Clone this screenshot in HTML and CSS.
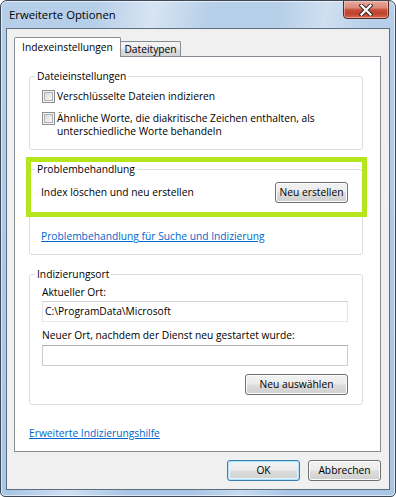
FILE: index.html
```html
<!DOCTYPE html>
<html lang="de">
<head>
<meta charset="utf-8">
<title>Erweiterte Optionen</title>
<link rel="stylesheet" href="styles.css">
</head>
<body>
<div class="window">
  <div class="titlebar">
    <span class="title">Erweiterte Optionen</span>
    <button class="close" aria-label="Schließen">
      <svg width="14" height="12" viewBox="0 0 14 12">
        <path d="M2.5 1.5 L11.5 10.5 M11.5 1.5 L2.5 10.5" stroke="#3a2a2a" stroke-width="4.2" stroke-linecap="square" fill="none"/>
        <path d="M2.5 1.5 L11.5 10.5 M11.5 1.5 L2.5 10.5" stroke="#ffffff" stroke-width="2.2" stroke-linecap="square" fill="none"/>
      </svg>
    </button>
  </div>
  <div class="client">
    <div class="tabs">
      <div class="tab active">Indexeinstellungen</div>
      <div class="tab">Dateitypen</div>
    </div>
    <div class="page">
      <fieldset class="group g1">
        <legend>Dateieinstellungen</legend>
        <label class="check"><input type="checkbox"><span>Verschlüsselte Dateien indizieren</span></label>
        <label class="check check2"><input type="checkbox"><span>Ähnliche Worte, die diakritische Zeichen enthalten, als<br>unterschiedliche Worte behandeln</span></label>
      </fieldset>
      <div class="annot">
        <fieldset class="group g2">
          <legend>Problembehandlung</legend>
          <div class="row">
            <span>Index löschen und neu erstellen</span>
            <button class="btn btn-rebuild">Neu erstellen</button>
          </div>
          <a class="link trouble" href="#">Problembehandlung für Suche und Indizierung</a>
        </fieldset>
        <div class="highlight"></div>
      </div>
      <fieldset class="group g3">
        <legend>Indizierungsort</legend>
        <div class="field-label">Aktueller Ort:</div>
        <div class="textbox readonly">C:\ProgramData\Microsoft</div>
        <div class="field-label second">Neuer Ort, nachdem der Dienst neu gestartet wurde:</div>
        <div class="textbox"></div>
        <div class="right">
          <button class="btn btn-select">Neu auswählen</button>
        </div>
      </fieldset>
      <a class="link help" href="#">Erweiterte Indizierungshilfe</a>
    </div>
    <div class="actions">
      <button class="btn btn-default">OK</button>
      <button class="btn">Abbrechen</button>
    </div>
  </div>
</div>
</body>
</html>
```

FILE: styles.css
```css
html, body {
  margin: 0;
  padding: 0;
  background: #ffffff;
}

body {
  font-family: "Open Sans", "Noto Sans", sans-serif;
  font-size: 10.25px;
  line-height: 13px;
  color: #000000;
}

.window {
  box-sizing: border-box;
  width: 396px;
  height: 497px;
  border: 1px solid #3d4957;
  border-radius: 7px 7px 5px 5px;
  padding: 0 5px 6px 5px;
  display: flex;
  flex-direction: column;
  background:
    linear-gradient(100deg, rgba(255,255,255,0) 20%, rgba(255,255,255,0.45) 32%, rgba(255,255,255,0) 44%),
    linear-gradient(100deg, rgba(255,255,255,0) 58%, rgba(255,255,255,0.35) 68%, rgba(255,255,255,0) 78%),
    linear-gradient(180deg, #b7cfe9 0%, #b0cae7 40%, #a9c6e6 100%);
  box-shadow: inset 0 0 0 1px rgba(255,255,255,0.6);
  overflow: hidden;
}

.titlebar {
  height: 27px;
  display: flex;
  justify-content: space-between;
  align-items: flex-start;
  flex: none;
}

.title {
  padding: 7px 0 0 3px;
  font-size: 11.3px;
  line-height: 14px;
  color: #000;
}

.close {
  box-sizing: border-box;
  width: 46px;
  height: 19px;
  margin: -1px 1px 0 0;
  padding: 0;
  border: 1px solid #5a2b25;
  border-radius: 0 0 4px 4px;
  background: linear-gradient(180deg, #e9aa9d 0%, #d98a7a 40%, #c6503b 52%, #c0422c 75%, #d66b55 100%);
  box-shadow: inset 0 0 0 1px rgba(255,220,210,0.45);
  display: flex;
  align-items: center;
  justify-content: center;
}

.client {
  box-sizing: border-box;
  height: 462px;
  border: 1px solid #5f6e7e;
  background: #f0f0f0;
  padding: 8px 0 0 7px;
  display: flex;
  flex-direction: column;
}

.tabs {
  position: relative;
  z-index: 1;
  height: 20px;
  margin-bottom: -1px;
  display: flex;
  align-items: flex-start;
}

.tab {
  box-sizing: border-box;
  border: 1px solid #898c95;
  border-bottom: none;
  text-align: center;
  white-space: nowrap;
}

.tab.active {
  position: relative;
  z-index: 2;
  width: 107px;
  height: 20px;
  background: #ffffff;
  padding-top: 3px;
  border-radius: 2px 2px 0 0;
}

.tab:not(.active) {
  width: 61px;
  height: 15px;
  margin-top: 4px;
  margin-left: -1px;
  padding-top: 1px;
  background: linear-gradient(180deg, #f4f4f4 0%, #ececec 50%, #dedede 51%, #d4d4d4 100%);
  border-radius: 2px 2px 0 0;
}

.page {
  box-sizing: border-box;
  width: 367px;
  height: 396px;
  border: 1px solid #898c95;
  background: #ffffff;
  padding: 0 0 0 14px;
  display: flex;
  flex-direction: column;
  align-items: flex-start;
}

.group {
  box-sizing: border-box;
  width: 334px;
  min-inline-size: 0;
  margin: 13px 0 0 0;
  border: 1px solid #d5dfe5;
  border-radius: 3px;
  padding: 0 14px 11px 11px;
}

.group legend {
  padding: 0 2px;
  line-height: 13px;
  color: #000;
}

.g1 {
  padding: 7px 12px 11px 12px;
}

.g1 legend,
.g3 legend {
  margin-left: -7px;
}

.check {
  display: flex;
  align-items: flex-start;
}

.check2 {
  margin-top: 9px;
}

.check input {
  -webkit-appearance: none;
  appearance: none;
  box-sizing: border-box;
  width: 13px;
  height: 13px;
  margin: 0 2px 0 0;
  flex: none;
  border: 1px solid #8e8f8f;
  background: linear-gradient(135deg, #cfd1d3 0%, #eeeeee 60%, #fafafa 100%);
  box-shadow: inset 0 0 0 1px #f4f4f4, inset 0 0 0 2px #aeb2b6;
}

.annot {
  position: relative;
  margin-top: 13px;
}

.g2 {
  margin-top: 0;
  padding: 6px 14px 11px 11px;
}

.g2 legend {
  margin-left: -6px;
}

.row {
  display: flex;
  justify-content: space-between;
  align-items: center;
}

.link {
  display: block;
  color: #0066cc;
  text-decoration: underline;
  text-underline-offset: 1px;
  white-space: nowrap;
}

.trouble {
  margin-top: 27px;
}

.highlight {
  position: absolute;
  left: -3px;
  top: -6px;
  width: 341px;
  height: 60px;
  box-sizing: border-box;
  border: 5px solid #b5e61d;
  pointer-events: none;
}

.g3 {
  padding: 5px 14px 9px 12px;
}

.field-label.second {
  margin-top: 7px;
}

.textbox {
  box-sizing: border-box;
  height: 21px;
  margin-top: 2px;
  border: 1px solid #abadb3;
  background: #ffffff;
  padding: 3px 2px 0 2px;
  white-space: nowrap;
}

.textbox.readonly {
  border-color: #cfd2d8 #e2e5ea #e8ecf0 #e2e5ea;
}

.textbox:not(.readonly) {
  margin-top: 3px;
  border-color: #abadb3 #c9ccd2 #c9ccd2 #c9ccd2;
}

.right {
  display: flex;
  justify-content: flex-end;
  margin-top: 8px;
}

.btn {
  box-sizing: border-box;
  height: 21px;
  width: 73px;
  padding: 0;
  font: inherit;
  line-height: 13px;
  color: #000;
  border: 1px solid #707070;
  border-radius: 3px;
  background: linear-gradient(180deg, #f2f2f2 0%, #ebebeb 48%, #dddddd 52%, #cfcfcf 100%);
  box-shadow: inset 0 0 0 1px #fcfcfc;
  white-space: nowrap;
}

.btn-select {
  width: 103px;
}

.help {
  margin-top: 22px;
}

.actions {
  display: flex;
  justify-content: flex-end;
  gap: 8px;
  margin-top: 8px;
  padding-right: 8px;
}

.btn-default {
  border-color: #3c7fb1;
  box-shadow: inset 0 0 0 1px #aee0f8, inset 0 0 0 2px #e4f4fc;
}
```
